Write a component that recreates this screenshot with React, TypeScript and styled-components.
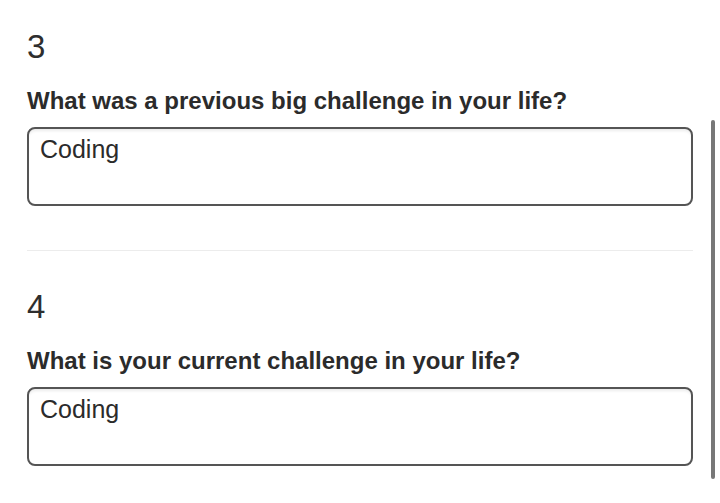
import React from "react";
import styled, { createGlobalStyle } from "styled-components";

const Global = createGlobalStyle`
  html, body { margin: 0; padding: 0; background: #fff; }
  body { font-family: "Liberation Sans", Arial, sans-serif; color: #2b2b2b; overflow: hidden; }
  * { box-sizing: border-box; }
`;

const Viewport = styled.div`
  position: relative;
  width: 720px;
  height: 503px;
  overflow: hidden;
`;

const Page = styled.div`
  padding: 0 27px;
  display: flex;
  flex-direction: column;
`;

const Section = styled.section`
  display: flex;
  flex-direction: column;
  padding: 36px 0 44px;
  border-top: 1px solid #ececec;
  &:first-child {
    padding-top: 27px;
    border-top: none;
  }
`;

const Number = styled.div`
  font-size: 33px;
  line-height: 40px;
  font-weight: 400;
  color: #2e2e2e;
  margin-bottom: 20px;
`;

const Label = styled.label`
  font-size: 24px;
  line-height: 28px;
  font-weight: 700;
  color: #2b2b2b;
  margin-bottom: 12px;
`;

const Answer = styled.textarea`
  width: 100%;
  height: 79px;
  resize: none;
  border: 2px solid #555;
  border-radius: 8px;
  padding: 6px 11px;
  font-family: "Liberation Sans", Arial, sans-serif;
  font-size: 25px;
  line-height: 28px;
  color: #2b2b2b;
  background: #fff;
  box-shadow: inset 0 3px 3px -1px rgba(0, 0, 0, 0.08);
  outline: none;
  overflow: hidden;
`;

const Scrollbar = styled.div`
  position: absolute;
  left: 711px;
  top: 120px;
  width: 4px;
  height: 359px;
  border-radius: 2px;
  background: #777;
`;

const questions = [
  { n: 3, q: "What was a previous big challenge in your life?", a: "Coding" },
  { n: 4, q: "What is your current challenge in your life?", a: "Coding" },
];

export default function App() {
  return (
    <>
      <Global />
      <Viewport>
        <Page>
          {questions.map((item) => (
            <Section key={item.n}>
              <Number>{item.n}</Number>
              <Label>{item.q}</Label>
              <Answer defaultValue={item.a} />
            </Section>
          ))}
        </Page>
        <Scrollbar />
      </Viewport>
    </>
  );
}
